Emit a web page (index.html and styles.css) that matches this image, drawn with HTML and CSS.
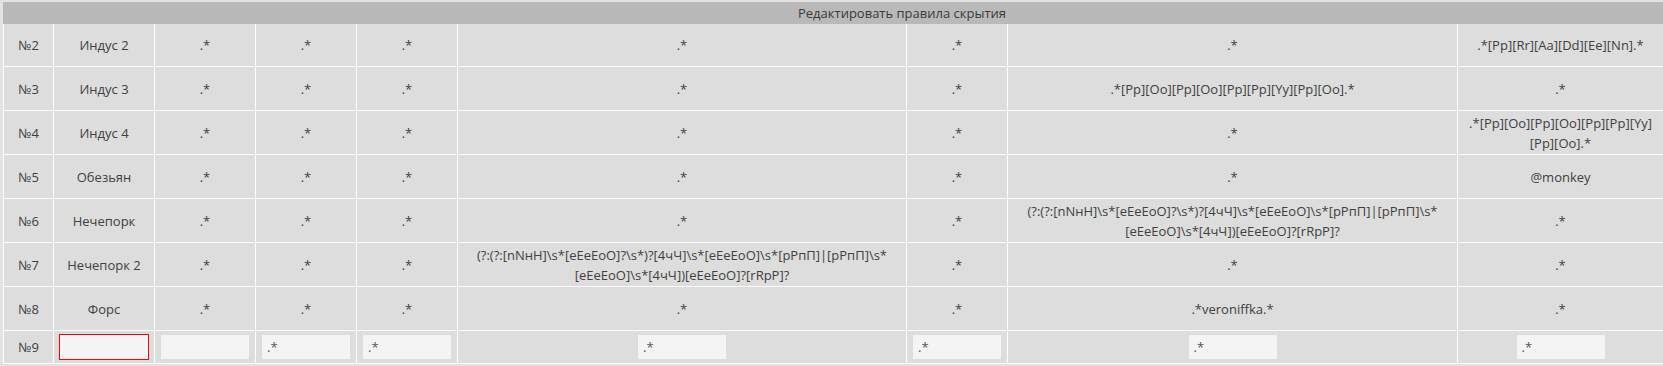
FILE: index.html
```html
<!DOCTYPE html>
<html lang="ru">
<head>
<meta charset="utf-8">
<title>Редактировать правила скрытия</title>
<link rel="stylesheet" href="styles.css">
</head>
<body>
<div class="page">
  <div class="title">Редактировать правила скрытия</div>
  <div class="rules">
    <div class="cell">№2</div><div class="cell">Индус 2</div><div class="cell">.*</div><div class="cell">.*</div><div class="cell">.*</div><div class="cell">.*</div><div class="cell">.*</div><div class="cell">.*</div><div class="cell">.*[Pp][Rr][Aa][Dd][Ee][Nn].*</div>

    <div class="cell">№3</div><div class="cell">Индус 3</div><div class="cell">.*</div><div class="cell">.*</div><div class="cell">.*</div><div class="cell">.*</div><div class="cell">.*</div><div class="cell">.*[Pp][Oo][Pp][Oo][Pp][Pp][Yy][Pp][Oo].*</div><div class="cell">.*</div>

    <div class="cell">№4</div><div class="cell">Индус 4</div><div class="cell">.*</div><div class="cell">.*</div><div class="cell">.*</div><div class="cell">.*</div><div class="cell">.*</div><div class="cell">.*</div><div class="cell">.*[Pp][Oo][Pp][Oo][Pp][Pp][Yy]<br>[Pp][Oo].*</div>

    <div class="cell">№5</div><div class="cell">Обезьян</div><div class="cell">.*</div><div class="cell">.*</div><div class="cell">.*</div><div class="cell">.*</div><div class="cell">.*</div><div class="cell">.*</div><div class="cell">@monkey</div>

    <div class="cell">№6</div><div class="cell">Нечепорк</div><div class="cell">.*</div><div class="cell">.*</div><div class="cell">.*</div><div class="cell">.*</div><div class="cell">.*</div><div class="cell">(?:(?:[nNнН]\s*[eEеЕoO]?\s*)?[4чЧ]\s*[eEеЕoO]\s*[pPпП]|[pPпП]\s*<br>[eEеЕoO]\s*[4чЧ])[eEеЕoO]?[rRрР]?</div><div class="cell">.*</div>

    <div class="cell">№7</div><div class="cell">Нечепорк 2</div><div class="cell">.*</div><div class="cell">.*</div><div class="cell">.*</div><div class="cell">(?:(?:[nNнН]\s*[eEеЕoO]?\s*)?[4чЧ]\s*[eEеЕoO]\s*[pPпП]|[pPпП]\s*<br>[eEеЕoO]\s*[4чЧ])[eEеЕoO]?[rRрР]?</div><div class="cell">.*</div><div class="cell">.*</div><div class="cell">.*</div>

    <div class="cell">№8</div><div class="cell">Форс</div><div class="cell">.*</div><div class="cell">.*</div><div class="cell">.*</div><div class="cell">.*</div><div class="cell">.*</div><div class="cell">.*veroniffka.*</div><div class="cell">.*</div>

    <div class="cell">№9</div>
    <div class="cell"><input class="field field-error" type="text" value=""></div>
    <div class="cell"><input class="field" type="text" value=""></div>
    <div class="cell"><input class="field" type="text" value=".*"></div>
    <div class="cell"><input class="field" type="text" value=".*"></div>
    <div class="cell"><input class="field" type="text" value=".*"></div>
    <div class="cell"><input class="field" type="text" value=".*"></div>
    <div class="cell"><input class="field" type="text" value=".*"></div>
    <div class="cell"><input class="field" type="text" value=".*"></div>
  </div>
</div>
</body>
</html>
```
FILE: styles.css
```css
html, body {
  margin: 0;
  padding: 0;
  background: #e2e2e2;
}

body {
  font-family: "Open Sans", "Noto Sans", sans-serif;
  font-size: 13px;
  color: #404040;
}

.page {
  padding: 2px 0 0 3px;
}

.title {
  height: 22px;
  padding-left: 138px;
  background: #b9b9b9;
  color: #3a3a3a;
  font-size: 13px;
  line-height: 22px;
  text-align: center;
}

.rules {
  display: grid;
  grid-template-columns: 50px 101px 101px 101px 101px 449px 101px 450px 1fr;
  grid-template-rows: 43px 44px 44px 44px 44px 44px 44px 33px;
}

.cell {
  box-sizing: border-box;
  display: flex;
  align-items: center;
  justify-content: center;
  text-align: center;
  background: #dddddd;
  border-left: 1px solid #ffffff;
  border-bottom: 1px solid #ffffff;
  line-height: 20px;
  padding: 0 4px;
}

.field {
  box-sizing: border-box;
  width: 88px;
  height: 24px;
  margin: 0;
  padding: 0 4px;
  border: 1px solid #f4f4f4;
  background: #f4f4f4;
  font-family: "Open Sans", "Noto Sans", sans-serif;
  font-size: 13px;
  color: #555555;
  outline: none;
}

.field-error {
  outline: 1px solid #ff0000;
}
```
